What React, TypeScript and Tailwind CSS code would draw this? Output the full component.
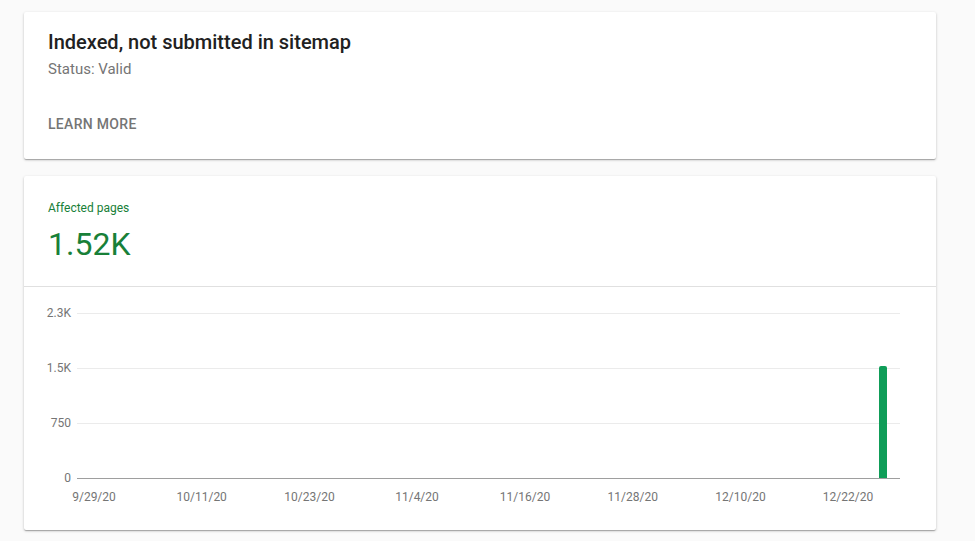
import React from 'react';

const Y_TICKS = [
  { label: '2.3K', y: 26 },
  { label: '1.5K', y: 81 },
  { label: '750', y: 136 },
];

const X_TICKS = [
  { label: '9/29/20', x: 70 },
  { label: '10/11/20', x: 177.7 },
  { label: '10/23/20', x: 285.5 },
  { label: '11/4/20', x: 393 },
  { label: '11/16/20', x: 501 },
  { label: '11/28/20', x: 608.8 },
  { label: '12/10/20', x: 716.5 },
  { label: '12/22/20', x: 824 },
];

const CARD =
  'bg-white rounded-[2px] shadow-[0_1px_3px_rgba(0,0,0,0.2),0_1px_1px_rgba(0,0,0,0.14),0_2px_1px_-1px_rgba(0,0,0,0.12)]';

function Chart() {
  return (
    <svg width="912" height="243" viewBox="0 0 912 243" className="block">
      {/* grid */}
      {Y_TICKS.map((t) => (
        <g key={t.label}>
          <line x1="53" x2="876" y1={t.y + 0.5} y2={t.y + 0.5} stroke="#ebebeb" strokeWidth="1" />
          <text x="47" y={t.y} textAnchor="end" dominantBaseline="central" fontSize="12" fill="#757575" fontFamily="Roboto, sans-serif">
            {t.label}
          </text>
        </g>
      ))}
      <text x="47" y="191" textAnchor="end" dominantBaseline="central" fontSize="12" fill="#757575" fontFamily="Roboto, sans-serif">
        0
      </text>

      {/* bar */}
      <path d="M855 191 V81 Q855 79 857 79 H861 Q863 79 863 81 V191 Z" fill="#0f9d58" />

      {/* axis */}
      <line x1="53" x2="876" y1="191.5" y2="191.5" stroke="#9e9e9e" strokeWidth="1" />

      {X_TICKS.map((t) => (
        <text key={t.label} x={t.x} y="210" textAnchor="middle" dominantBaseline="central" fontSize="12" fill="#757575" fontFamily="Roboto, sans-serif">
          {t.label}
        </text>
      ))}
    </svg>
  );
}

export default function App() {
  return (
    <div className="min-h-screen bg-[#fafafa] px-6 pt-3 font-['Roboto',sans-serif]">
      <div className="w-[912px] flex flex-col gap-[17px]">
        {/* Issue header card */}
        <div className={`${CARD} h-[147px] px-6 pt-4`}>
          <h1 className="text-[20px] leading-7 font-medium text-[#212121]">
            Indexed, not submitted in sitemap
          </h1>
          <p className="mt-[3px] text-[15px] leading-5 text-[#757575]">Status: Valid</p>
          <button className="mt-[35px] block text-sm leading-5 font-medium uppercase tracking-[0.3px] text-[#757575]">
            Learn more
          </button>
        </div>

        {/* Affected pages card */}
        <div className={`${CARD} h-[354px] overflow-hidden`}>
          <div className="px-6 pt-6 pb-[22px] border-b border-[#e0e0e0]">
            <div className="text-xs leading-4 text-[#188038]">Affected pages</div>
            <div className="mt-2 text-[32px] leading-10 text-[#188038]">1.52K</div>
          </div>
          <Chart />
        </div>
      </div>
    </div>
  );
}
